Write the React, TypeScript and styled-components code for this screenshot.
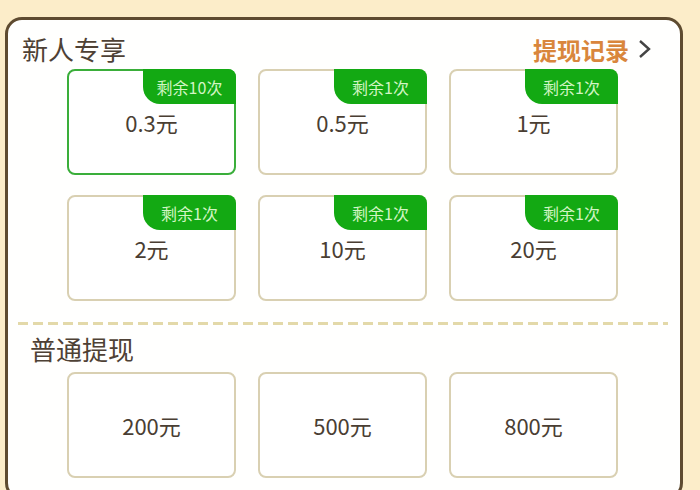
import styled, { createGlobalStyle } from "styled-components";

const GlobalStyle = createGlobalStyle`
  html, body {
    margin: 0;
    padding: 0;
    background: #fcedc9;
    overflow: hidden;
  }
  body {
    font-family: "Noto Sans CJK SC", "Noto Sans", sans-serif;
  }
`;

const Page = styled.div`
  width: 700px;
  height: 490px;
  padding: 17px 0 0 5px;
  box-sizing: border-box;
`;

const Panel = styled.div`
  width: 678px;
  height: 483px;
  box-sizing: border-box;
  background: #fffffe;
  border: 3px solid #5e4b30;
  border-radius: 17px;
`;

const Header = styled.div`
  display: flex;
  justify-content: space-between;
  align-items: center;
  height: 30px;
  padding: 14px 29px 0 14px;
`;

const Title = styled.div<{ $indent?: number }>`
  font-size: 26px;
  line-height: 30px;
  color: #4e4135;
  padding-left: ${(p) => p.$indent ?? 0}px;
`;

const RecordLink = styled.div`
  display: flex;
  align-items: center;
  gap: 9px;
  font-size: 24px;
  font-weight: bold;
  color: #d9863c;
`;

const Grid = styled.div<{ $top: number }>`
  display: grid;
  grid-template-columns: repeat(3, 169px);
  column-gap: 22px;
  row-gap: 20px;
  margin: ${(p) => p.$top}px 0 0 59px;
`;

const Card = styled.div<{ $active?: boolean }>`
  position: relative;
  height: 106px;
  box-sizing: border-box;
  border: 2px solid ${(p) => (p.$active ? "#3aae3a" : "#d9d0b2")};
  border-radius: 8px;
  display: flex;
  align-items: center;
  justify-content: center;
  font-size: 22px;
  color: #4a3e33;
  background: #fff;
`;

const Badge = styled.div`
  position: absolute;
  top: -2px;
  right: -2px;
  width: 93px;
  height: 35px;
  background: #13a913;
  border-radius: 0 8px 0 17px;
  color: #d2f5c4;
  font-size: 16px;
  display: flex;
  align-items: center;
  justify-content: center;
`;

const Divider = styled.div`
  height: 3px;
  margin: 21px 12px 0 10px;
  background: repeating-linear-gradient(
    to right,
    #e3d9a9 0 10px,
    transparent 10px 15px
  );
`;

const SectionTitle = styled(Title)`
  margin-top: 9px;
`;

const Chevron = () => (
  <svg width="13" height="20" viewBox="0 0 13 20">
    <path d="M2 2 L11 10 L2 18" fill="none" stroke="#444" strokeWidth="2.4" />
  </svg>
);

const newcomer = [
  { amount: "0.3元", left: 10 },
  { amount: "0.5元", left: 1 },
  { amount: "1元", left: 1 },
  { amount: "2元", left: 1 },
  { amount: "10元", left: 1 },
  { amount: "20元", left: 1 },
];

const normal = ["200元", "500元", "800元"];

export default function App() {
  return (
    <>
      <GlobalStyle />
      <Page>
        <Panel>
          <Header>
            <Title>新人专享</Title>
            <RecordLink>
              提现记录
              <Chevron />
            </RecordLink>
          </Header>
          <Grid $top={5}>
            {newcomer.map((item, index) => (
              <Card key={item.amount} $active={index === 0}>
                <Badge>剩余{item.left}次</Badge>
                {item.amount}
              </Card>
            ))}
          </Grid>
          <Divider />
          <SectionTitle $indent={22}>普通提现</SectionTitle>
          <Grid $top={8}>
            {normal.map((amount) => (
              <Card key={amount}>{amount}</Card>
            ))}
          </Grid>
        </Panel>
      </Page>
    </>
  );
}
